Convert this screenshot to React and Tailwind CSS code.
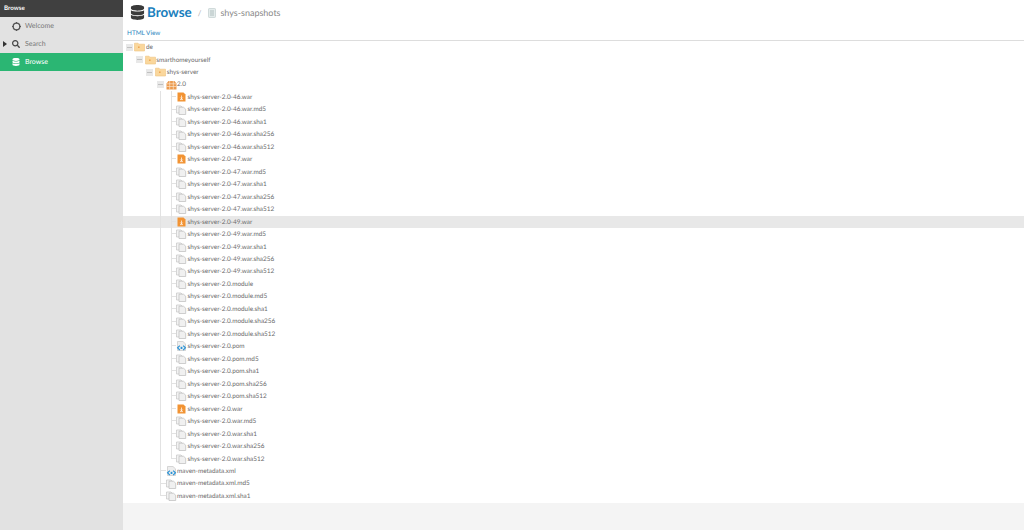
import React from 'react';
import { FaDatabase, FaSearch } from 'react-icons/fa';

const FILE_SUFFIXES = ['', '.md5', '.sha1', '.sha256', '.sha512'];
const ARTIFACTS = ['2.0-46.war', '2.0-47.war', '2.0-49.war', '2.0.module', '2.0.pom', '2.0.war'];

const FolderIcon = () => (
    <svg width="11" height="10" viewBox="0 0 11 10" className="shrink-0">
        <path d="M0.5 2.2 L0.5 1.2 L4 1.2 L5 2.2 L10.5 2.2 L10.5 9 L0.5 9 Z" fill="#fad79c" stroke="#efc27f" strokeWidth="0.6" />
        <rect x="4" y="4.5" width="1.6" height="1.4" fill="#eda24e" />
    </svg>
);

const PackageIcon = () => (
    <svg width="11" height="10" viewBox="0 0 11 10" className="shrink-0">
        <path d="M2.5 1 L8.5 1 L10.5 3.5 L10.5 9.5 L0.5 9.5 L0.5 3.5 Z" fill="#ec9a4e" />
        <path d="M0.5 3.8 H10.5 M0.5 6.5 H10.5 M3.7 1 V9.5 M7.3 1 V9.5" stroke="#fbe3c9" strokeWidth="0.7" />
    </svg>
);

const WarIcon = () => (
    <svg width="11" height="10" viewBox="0 0 11 10" className="shrink-0">
        <path d="M1.5 0.5 L7.5 0.5 L9.5 2.5 L9.5 9.5 L1.5 9.5 Z" fill="#f29333" />
        <path d="M5.5 3.5 V7 M4 7.6 H7 M4.3 5.5 L5.5 6.8 L6.7 5.5" stroke="#fff" strokeWidth="0.7" fill="none" />
    </svg>
);

const FileIcon = () => (
    <svg width="11" height="10" viewBox="0 0 11 10" className="shrink-0">
        <path d="M0.5 1 L5 1 L7 3 L7 8 L0.5 8 Z" fill="#f3f3f3" stroke="#c4c4c4" strokeWidth="0.7" />
        <path d="M3 2.2 L7.5 2.2 L9.7 4.2 L9.7 9.5 L3 9.5 Z" fill="#f0f0f0" stroke="#bcbcbc" strokeWidth="0.7" />
    </svg>
);

const PomIcon = () => (
    <svg width="11" height="10" viewBox="0 0 11 10" className="shrink-0">
        <path d="M1.5 0.5 L7 0.5 L9.5 2.8 L9.5 9.5 L1.5 9.5 Z" fill="#eeeeee" stroke="#c0c0c0" strokeWidth="0.6" />
        <path d="M3.8 4.6 L1.6 6.8 L3.8 9 M7.2 4.6 L9.4 6.8 L7.2 9" fill="none" stroke="#2b93d6" strokeWidth="1.2" />
        <rect x="4.6" y="5.8" width="1.8" height="2.2" fill="#2b93d6" />
    </svg>
);

const RepoIcon = () => (
    <svg width="8" height="10" viewBox="0 0 8 10" className="shrink-0">
        <rect x="0.5" y="0.5" width="7" height="9" rx="0.8" fill="#e4ecec" stroke="#c2cfcf" strokeWidth="0.7" />
        <path d="M2 3 H6 M2 5 H6 M2 7 H6" stroke="#a3b5b5" strokeWidth="0.8" />
    </svg>
);

const WelcomeIcon = () => (
    <svg width="9" height="9" viewBox="0 0 10 10" className="shrink-0">
        <circle cx="5" cy="5" r="3.7" fill="none" stroke="#555555" strokeWidth="1.5" />
        <path d="M5 0 V1.6 M5 8.4 V10 M0 5 H1.6 M8.4 5 H10" stroke="#555555" strokeWidth="1.3" />
    </svg>
);

// one indentation column of the tree, optionally with its vertical guide
const Guide = ({ line }) => (
    <div className="w-[10.4px] shrink-0 h-full">
        {line && <div className="ml-[5px] h-full border-l border-[#e2e2e2]" />}
    </div>
);

const Connector = ({ last }) => (
    <div className="w-[10.4px] shrink-0 h-full">
        <div className="ml-[5px] h-1/2 border-l border-b border-[#e2e2e2]" />
        {!last && <div className="ml-[5px] h-1/2 border-l border-[#e2e2e2]" />}
    </div>
);

const Expander = () => (
    <div className="w-[10.4px] shrink-0 h-full flex items-center justify-center">
        <div className="w-[7px] h-[7px] bg-[#e8e8e8] flex items-center justify-center">
            <div className="w-[5px] h-px bg-[#c0c0c0]" />
        </div>
    </div>
);

const TreeRow = ({ guides = [], expander, last, icon, label, selected }) => (
    <div className={`flex items-center h-[12.47px] pl-[1px] ${selected ? 'bg-[#e8e8e8]' : ''}`}>
        {guides.map((line, i) => <Guide key={i} line={line} />)}
        {expander ? <Expander /> : <Connector last={last} />}
        {icon}
        <span className="ml-[0.5px] pt-[2px] text-[6.4px] leading-none text-[#6a6a6a] whitespace-nowrap">{label}</span>
    </div>
);

const SideItem = ({ icon, label, active, arrow }) => (
    <div className={`flex items-center h-[18px] ${active ? 'bg-[#2bb673] text-white' : 'text-[#777777]'}`}>
        <div className="w-[12px] pl-[3px] flex items-center">
            {arrow && <div className="w-0 h-0 border-y-[3px] border-y-transparent border-l-[4px] border-l-[#333333]" />}
        </div>
        <div className="w-[13px] flex items-center">{icon}</div>
        <span className="text-[7px] leading-none">{label}</span>
    </div>
);

const App = () => {
    const fileRows = ARTIFACTS.flatMap((artifact) =>
        FILE_SUFFIXES.map((suffix) => {
            const name = `shys-server-${artifact}${suffix}`;
            let icon = <FileIcon />;
            if (suffix === '' && artifact.endsWith('.war')) icon = <WarIcon />;
            if (suffix === '' && artifact.endsWith('.pom')) icon = <PomIcon />;
            return { name, icon };
        })
    );

    return (
        <div className="flex w-[1024px] h-[530px] overflow-hidden bg-white font-['Lato',sans-serif] antialiased [text-rendering:geometricPrecision]">
            <aside className="w-[123px] shrink-0 bg-[#e2e2e2]">
                <div className="h-[17px] bg-[#404040] flex items-center pl-[4px] text-[6.2px] font-bold text-white">Browse</div>
                <SideItem icon={<WelcomeIcon />} label="Welcome" />
                <SideItem icon={<FaSearch className="text-[8px] text-[#444444]" />} label="Search" arrow />
                <SideItem icon={<FaDatabase className="text-[8px] text-white" />} label="Browse" active />
            </aside>

            <main className="flex-1 flex flex-col min-w-0">
                <header className="h-[25px] flex items-center pl-[7px] shrink-0">
                    <FaDatabase className="text-[15px] text-[#3a3a3a]" />
                    <h1 className="ml-[2px] text-[13.4px] font-bold leading-none text-[#1b7fbd]">Browse</h1>
                    <span className="ml-[6px] mr-[7px] text-[8px] leading-none text-[#aaaaaa]">/</span>
                    <RepoIcon />
                    <span className="ml-[4px] text-[9px] leading-none text-[#888888]">shys-snapshots</span>
                </header>
                <div className="h-[16px] shrink-0 pl-[4px] pt-[4px] border-b border-[#dddddd] text-[6.4px] leading-[10px] text-[#2a87c0]">HTML View</div>

                <div className="pb-[1px]">
                    <TreeRow expander icon={<FolderIcon />} label="de" />
                    <TreeRow guides={[false]} expander icon={<FolderIcon />} label="smarthomeyourself" />
                    <TreeRow guides={[false, false]} expander icon={<FolderIcon />} label="shys-server" />
                    <TreeRow guides={[false, false, false]} expander icon={<PackageIcon />} label="2.0" />
                    {fileRows.map((row, i) => (
                        <TreeRow
                            key={row.name}
                            guides={[false, false, false, true]}
                            last={i === fileRows.length - 1}
                            icon={row.icon}
                            label={row.name}
                            selected={row.name === 'shys-server-2.0-49.war'}
                        />
                    ))}
                    <TreeRow guides={[false, false, false]} icon={<PomIcon />} label="maven-metadata.xml" />
                    <TreeRow guides={[false, false, false]} icon={<FileIcon />} label="maven-metadata.xml.md5" />
                    <TreeRow guides={[false, false, false]} last icon={<FileIcon />} label="maven-metadata.xml.sha1" />
                </div>
                <div className="flex-1 bg-[#f4f4f4]" />
            </main>
        </div>
    );
};

export default App;
